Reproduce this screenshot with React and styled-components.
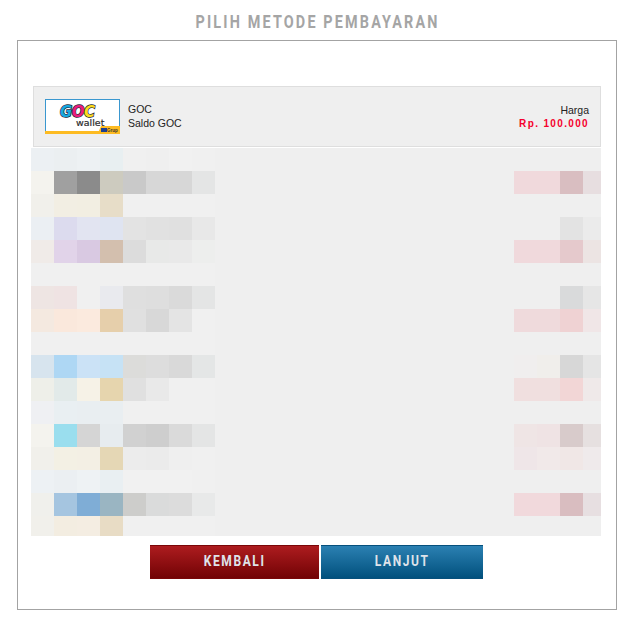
import React from "react";
import styled, { createGlobalStyle } from "styled-components";

const Global = createGlobalStyle`
  html, body { margin: 0; padding: 0; background: #fff; }
  body { font-family: "Liberation Sans", Arial, sans-serif; }
`;

const Page = styled.div`
  width: 635px;
  height: 617px;
  box-sizing: border-box;
  overflow: hidden;
`;

const Title = styled.h1`
  margin: 0;
  height: 40px;
  box-sizing: border-box;
  padding: 12px 0 0 0;
  text-align: center;
  font-family: Roboto, "Liberation Sans", sans-serif;
  font-size: 18px;
  line-height: 20px;
  font-weight: 700;
  letter-spacing: 2.7px;
  color: #a5a5a5;
`;

const Narrow = styled.span`
  display: inline-block;
  white-space: nowrap;
  transform: scaleX(${(p) => p.$x});
`;

const Panel = styled.section`
  margin-left: 17px;
  width: 600px;
  height: 570px;
  box-sizing: border-box;
  border: 1px solid #a3a3a3;
  padding: 45px 14px 0 13px;
`;

const Summary = styled.div`
  margin: 0 0 0 2px;
  width: 568px;
  height: 61px;
  box-sizing: border-box;
  border: 1px solid #dedede;
  background: #efefef;
  display: flex;
  align-items: center;
  justify-content: space-between;
  padding: 0 11px 0 11px;
  font-size: 10.5px;
  line-height: 14px;
  color: #222;
`;

const Method = styled.div`
  display: flex;
  align-items: center;
  gap: 8px;
`;

const MethodText = styled.div`
  margin-top: -2px;
`;

const LogoBox = styled.div`
  width: 75px;
  height: 35px;
  display: block;
  line-height: 0;
`;

const Price = styled.div`
  text-align: right;
`;

const Amount = styled.div`
  font-size: 10px;
  font-weight: 700;
  letter-spacing: 1.35px;
  color: #f5002d;
`;

const Mosaic = styled.div`
  margin-top: 1px;
  display: grid;
  grid-template-columns: repeat(24, 23px) 18px;
  grid-template-rows: repeat(16, 23px) 20px;
  width: 570px;
  background: #efefef;
`;

const Cell = styled.div`
  background: ${(p) => p.$c};
`;

const Actions = styled.div`
  margin-top: 9px;
  display: flex;
  justify-content: center;
  gap: 2px;
`;

const Btn = styled.button`
  width: ${(p) => p.$w}px;
  height: 34px;
  padding: 0 0 2px;
  border: 0;
  border-top: 1px solid ${(p) => p.$edge};
  border-bottom: 1px solid ${(p) => p.$edge};
  background: linear-gradient(${(p) => p.$from}, ${(p) => p.$to});
  color: #dfe3ea;
  font-family: Roboto, "Liberation Sans", sans-serif;
  font-size: 15px;
  font-weight: 700;
  letter-spacing: 2px;
`;

const Logo = () => (
  <svg width="75" height="35" viewBox="0 0 75 35">
    <rect x="0.5" y="0.5" width="74" height="34" fill="#fff" stroke="#3a97cf" />
    <rect x="0" y="32" width="75" height="3" fill="#fdbb22" />
    <polygon points="53,34 56,27 75,27 75,34" fill="#fdbb22" />
    <text
      x="15"
      y="17.5"
      fontFamily="'DejaVu Sans', sans-serif"
      fontWeight="700"
      fontStyle="italic"
      fontSize="15"
      letterSpacing="-0.6"
      stroke="#1c2a3a"
      strokeWidth="1.4"
      paintOrder="stroke"
    >
      <tspan fill="#17a9e0">G</tspan>
      <tspan fill="#ec1c7c">O</tspan>
      <tspan fill="#fcdc1c">C</tspan>
    </text>
    <text x="31" y="26.5" fontFamily="'DejaVu Sans', sans-serif" fontSize="9.5" fill="#2b2b2b" stroke="#2b2b2b" strokeWidth="0.2">wallet</text>
    <rect x="56" y="29" width="6" height="4" fill="#1c3f8f" />
    <text x="62" y="33" fontFamily="'Liberation Sans', sans-serif" fontWeight="700" fontSize="4.5" fill="#333">Grup</text>
  </svg>
);

const F = "#f0f0f0";
const _ = null;
const left = [
  ["#ecf0f3","#ebeff1","#edf1f3","#e8eff1",F,"#efefef","#f1f1f1",F],
  ["#f4f3ee","#a0a0a0","#8b8b8b","#cdcbbf","#c9c9c9","#d7d7d7","#d7d7d7","#e4e5e5"],
  ["#f1f0eb","#f2eee3","#f2eee2","#e7ddc8",F,F,F,F],
  ["#ebeff3","#dcdbee","#e2e4f1","#dfe4f1","#e3e3e3","#e1e1e1","#e0e0e0","#e8e8e8"],
  ["#f0ebe8","#e1d3e9","#d9c9e2","#d3bfae","#dcdcdc","#e8e9e8","#e9e9e9","#edeeed"],
  [F,F,F,F,F,F,F,F],
  ["#eee5e3","#efe3e3",F,"#e9eaee","#dfdfdf","#dedede","#dadada","#e4e5e5"],
  ["#f4e9e0","#fae8dc","#fbeade","#e6cfab","#e0e0e0","#d8d8d8","#e4e4e4",F],
  [F,F,F,F,F,F,F,F],
  ["#d7e4ee","#aed7f4","#cbe2f6","#c6e2f5","#dcdcda","#dddddd","#d9d9d9","#e4e6e6"],
  ["#eeefe9","#e2eae9","#f6f2e7","#e6d5ae","#e0e0e0","#e9e9e9",F,F],
  ["#eff0f3","#e9eff2","#e9eef1","#e9eef1",F,F,F,F],
  ["#f4f3ee","#9adeee","#d5d5d5","#e7ecef","#d1d1d1","#cecece","#dadada","#e4e5e5"],
  ["#f1f0eb","#f3f0e4","#f3efe4","#e5d7b5","#ececec","#ebebeb","#efefef",F],
  ["#edf1f4","#ebeff2","#eef2f4","#e9eff2","#f1f1f1","#f1f1f1","#f1f1f1",F],
  ["#f0f0ec","#a5c5e0","#7fadd6","#9ab5c2","#cdcdcb","#dadbdb","#dcdcdc","#e8e9e9"],
  ["#f1f0eb","#f3ede1","#f4ede2","#e8dcc5",F,F,F,F],
];
const right = {
  1: ["#f0d9dc","#f0d9dc","#d9bec1","#e7dee0"],
  3: [_,_,"#e3e3e3","#ebebeb"],
  4: ["#f0d9dc","#f0d9dc","#e5c9cc","#ece4e3"],
  6: [_,_,"#d9dadb","#e6e6e6"],
  7: ["#efdadc","#efdadc","#efd2d3","#f0e6e7"],
  9: ["#f0eeee","#f0eeeb","#d7d7d7","#e5e5e5"],
  10: ["#f0dfdf","#f0dfdf","#f2d6d6","#efe9e9"],
  12: ["#efe5e5","#efe3e4","#d8cbcb","#e6e0e0"],
  13: ["#efe6e8","#f1e9e9","#f0e7e6","#efeaeb"],
  15: ["#f1d9dc","#f1d9dc","#d9bdc0","#e7dfe1"],
};

const cells = [];
left.forEach((row, r) => {
  for (let c = 0; c < 25; c++) {
    let color = c < row.length ? row[c] : "#efefef";
    if (c >= 21) {
      const rr = right[r];
      color = (rr && rr[c - 21]) || "#efefef";
    }
    cells.push(<Cell key={r + "-" + c} $c={color} />);
  }
});

export default function App() {
  return (
    <Page>
      <Global />
      <Title><Narrow $x={0.8}>PILIH METODE PEMBAYARAN</Narrow></Title>
      <Panel>
        <Summary>
          <Method>
            <LogoBox><Logo /></LogoBox>
            <MethodText>
              <div>GOC</div>
              <div>Saldo GOC</div>
            </MethodText>
          </Method>
          <Price>
            <div>Harga</div>
            <Amount>Rp. 100.000</Amount>
          </Price>
        </Summary>
        <Mosaic>{cells}</Mosaic>
        <Actions>
          <Btn $w={169} $edge="#7a0608" $from="#ad1c1f" $to="#720305"><Narrow $x={0.8}>KEMBALI</Narrow></Btn>
          <Btn $w={162} $edge="#06507c" $from="#2b80b2" $to="#01507d"><Narrow $x={0.8}>LANJUT</Narrow></Btn>
        </Actions>
      </Panel>
    </Page>
  );
}
